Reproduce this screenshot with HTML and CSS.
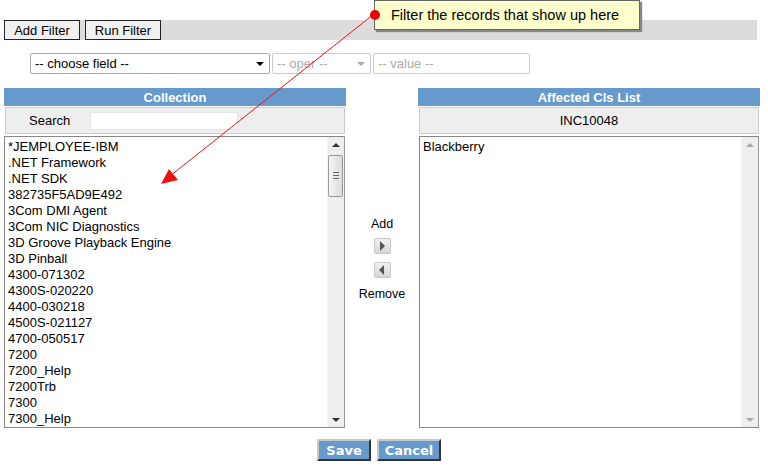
FILE: index.html
```html
<!DOCTYPE html>
<html>
<head>
<meta charset="utf-8">
<link rel="stylesheet" href="styles.css">
</head>
<body>
<div class="page">
  <div class="toolbar">
    <button class="tbtn">Add Filter</button>
    <button class="tbtn">Run Filter</button>
  </div>
  <div class="filters">
    <div class="sel sel-field">-- choose field --<span class="caret dark"></span></div>
    <div class="sel sel-oper dis">-- oper --<span class="caret"></span></div>
    <div class="sel sel-value dis">-- value --</div>
  </div>
  <div class="panels">
    <div class="panel">
      <div class="phead">Collection</div>
      <div class="subrow search-row"><span class="slabel">Search</span><span class="sinput"></span></div>
      <div class="listbox">
        <div class="items">
          <div>*JEMPLOYEE-IBM</div>
          <div>.NET Framework</div>
          <div>.NET SDK</div>
          <div>382735F5AD9E492</div>
          <div>3Com DMI Agent</div>
          <div>3Com NIC Diagnostics</div>
          <div>3D Groove Playback Engine</div>
          <div>3D Pinball</div>
          <div>4300-071302</div>
          <div>4300S-020220</div>
          <div>4400-030218</div>
          <div>4500S-021127</div>
          <div>4700-050517</div>
          <div>7200</div>
          <div>7200_Help</div>
          <div>7200Trb</div>
          <div>7300</div>
          <div>7300_Help</div>
        </div>
        <div class="sbar">
          <span class="sarrow up"></span>
          <span class="thumb"><span class="grip"></span></span>
          <span class="sfill"></span>
          <span class="sarrow down"></span>
        </div>
      </div>
    </div>
    <div class="middle">
      <div class="mlabel">Add</div>
      <span class="abtn"><span class="tri right"></span></span>
      <span class="abtn"><span class="tri left"></span></span>
      <div class="mlabel rem">Remove</div>
    </div>
    <div class="panel">
      <div class="phead">Affected CIs List</div>
      <div class="subrow inc-row">INC10048</div>
      <div class="listbox">
        <div class="items">
          <div>Blackberry</div>
        </div>
        <div class="sbar">
          <span class="sarrow up light"></span>
          <span class="sfill"></span>
          <span class="sarrow down light"></span>
        </div>
      </div>
    </div>
  </div>
  <div class="actions">
    <button class="bbtn">Save</button>
    <button class="bbtn">Cancel</button>
  </div>
</div>
<svg class="pointer" width="768" height="469" viewBox="0 0 768 469">
  <line x1="374" y1="14" x2="170" y2="176" stroke="#ee1111" stroke-width="1"/>
  <polygon points="161,184 169,169 178,180" fill="#ee1111"/>
</svg>
<div class="tip"><span class="dot"></span>Filter the records that show up here</div>
</body>
</html>
```
FILE: styles.css
```css
html, body { margin: 0; padding: 0; background: #fff; }
body { font-family: "Liberation Sans", Arial, sans-serif; font-size: 12px; color: #000; width: 768px; height: 469px; position: relative; overflow: hidden; }
.page { padding: 20px 0 0 4px; }
.toolbar { width: 753px; height: 20px; background: #dcdcdc; display: flex; gap: 5px; }
.tbtn { height: 20px; width: 76px; padding: 0; margin: 0; border: 1px solid #222; background: #f0f0f0; font-family: "Liberation Sans", Arial, sans-serif; font-size: 13px; color: #000; }
.filters { display: flex; gap: 2px; margin: 13px 0 0 26px; height: 21px; }
.sel { box-sizing: border-box; height: 21px; border: 1px solid #a9a9a9; border-radius: 2px; background: #fff; font-size: 13px; line-height: 19px; padding-left: 4px; position: relative; color: #000; }
.sel.dis { color: #aaa; border-color: #ccc; }
.sel-field { width: 240px; }
.sel-oper { width: 99px; }
.sel-value { width: 157px; }
.caret { position: absolute; right: 5px; top: 8px; width: 0; height: 0; border-left: 4px solid transparent; border-right: 4px solid transparent; border-top: 4px solid #aaa; }
.caret.dark { border-top-color: #000; }
.panels { display: flex; margin-top: 14px; }
.panel { width: 342px; display: flex; flex-direction: column; }
.phead { height: 18px; background: #6699cc; color: #fff; font-weight: bold; font-size: 13px; line-height: 19px; text-align: center; }
.subrow { box-sizing: border-box; height: 27px; margin: 1px 1px 0; background: #eeeeee; border: 1px solid #cccccc; display: flex; align-items: center; }
.search-row { padding-left: 23px; }
.slabel { font-size: 13px; width: 61px; }
.sinput { width: 148px; height: 18px; background: #fff; border: 1px solid #e4e4e4; box-sizing: border-box; }
.inc-row { justify-content: center; font-size: 13px; }
.listbox { box-sizing: border-box; height: 292px; margin: 2px 1px 0 0; border: 1px solid #888; border-right-color: #999; display: flex; background: #fff; }
.panel:last-child .listbox { margin-left: 1px; }
.items { flex: 1; padding: 2px 0 0 3px; font-size: 13px; line-height: 16px; overflow: hidden; }
.sbar { width: 16px; background: #eeeeee; display: flex; flex-direction: column; border-left: 1px solid #f4f4f4; }
.sarrow { height: 16px; position: relative; display: block; }
.sarrow::after { content: ""; position: absolute; left: 4px; width: 0; height: 0; border-left: 4px solid transparent; border-right: 4px solid transparent; }
.sarrow.up::after { top: 6px; border-bottom: 4px solid #333; }
.sarrow.down::after { top: 7px; border-top: 4px solid #333; }
.sarrow.light.up::after { border-bottom-color: #aaa; }
.sarrow.light.down::after { border-top-color: #aaa; }
.thumb { height: 42px; margin: 2px 1px 0 0; box-sizing: border-box; border: 1px solid #999; border-radius: 2px; background: linear-gradient(to right, #f4f4f4, #dcdcdc); position: relative; display: block; }
.grip { position: absolute; left: 4px; top: 16px; width: 6px; height: 7px; background: repeating-linear-gradient(to bottom, #666 0 1px, transparent 1px 3px); }
.sfill { flex: 1; display: block; }
.middle { width: 72px; display: flex; flex-direction: column; align-items: center; padding-top: 129px; }
.mlabel { font-size: 12.5px; line-height: 14px; height: 14px; }
.abtn { width: 17px; height: 16px; box-sizing: border-box; border: 1px solid #c8c8c8; border-radius: 2px; background: linear-gradient(to bottom, #f0f0f0, #d8d8d8); margin-top: 7px; display: flex; align-items: center; justify-content: center; }
.abtn + .abtn { margin-top: 8px; }
.mlabel.rem { margin-top: 9px; }
.tri { width: 0; height: 0; border-top: 5px solid transparent; border-bottom: 5px solid transparent; }
.tri.right { border-left: 5px solid #555; margin-left: 1px; }
.tri.left { border-right: 5px solid #555; margin-right: 1px; }
.actions { display: flex; gap: 6px; margin: 11px 0 0 313px; }
.bbtn { height: 22px; padding: 0; margin: 0; background: #6699cc; color: #fff; font-family: "DejaVu Sans", Verdana, sans-serif; font-weight: bold; font-size: 13px; border-style: solid; border-width: 2px; border-color: #c8c8c8 #333 #333 #c8c8c8; }
.bbtn:first-child { width: 54px; }
.bbtn:last-child { width: 64px; }
.pointer { position: absolute; left: 0; top: 0; pointer-events: none; }
.tip { position: absolute; left: 374px; top: 0; width: 266px; height: 30px; box-sizing: border-box; background: #ffffcc; border: 1px solid #666; box-shadow: 2px 2px 1px #888; font-size: 14.5px; line-height: 28px; padding-left: 16px; color: #000; }
.dot { position: absolute; left: -5px; top: 9px; width: 10px; height: 10px; border-radius: 50%; background: #e00; }
```
